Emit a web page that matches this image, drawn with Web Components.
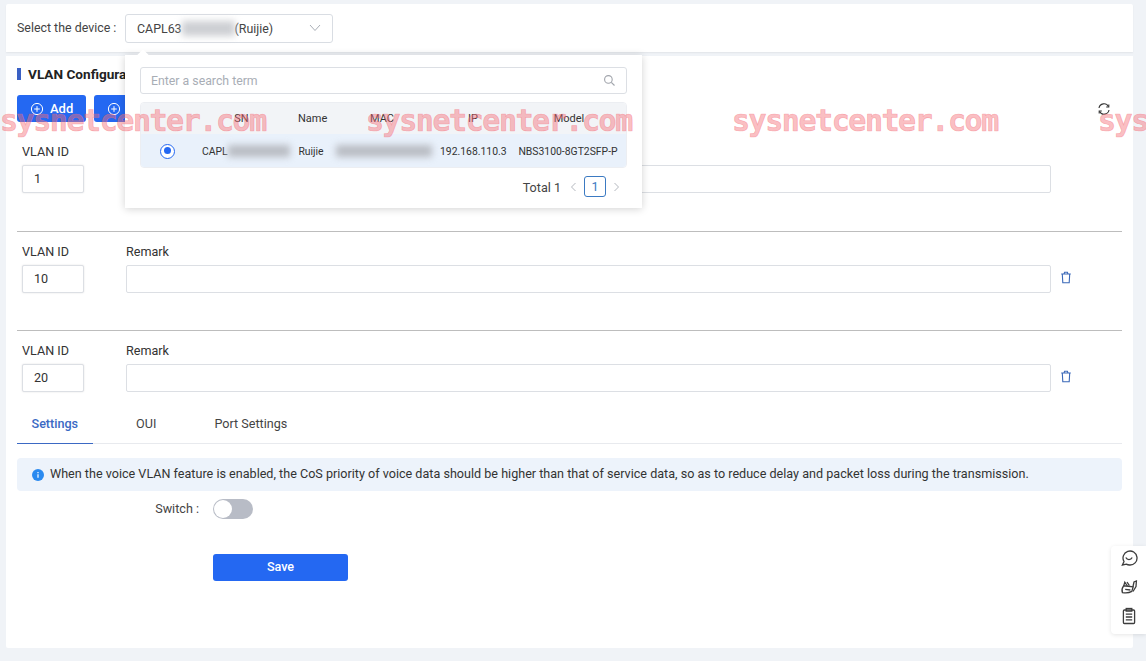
<!DOCTYPE html>
<html>
<head>
<meta charset="utf-8">
<title>VLAN Configuration</title>
<style>
  html, body { margin: 0; height: 100%; }
  body {
    position: relative;
    width: 1146px;
    height: 661px;
    overflow: hidden;
    background: #f0f3f7;
    font-family: Roboto, "Liberation Sans", sans-serif;
    font-size: 12.6px;
    color: #333;
  }
</style>
</head>
<body>
<device-bar label="Select the device" value="(Ruijie)" prefix="CAPL63"></device-bar>
<vlan-page></vlan-page>
<device-popover></device-popover>
<float-tools></float-tools>
<water-mark></water-mark>

<script>
class deviceBar extends HTMLElement {
  constructor() {
    super();
    this.attachShadow({ mode: "open" });
  }
  connectedCallback() {
    this.shadowRoot.innerHTML = `
      <style>
        :host { display: flex; align-items: center; height: 48px; margin: 4px 13px 4px 6px; padding-left: 11px; background: #fff; box-sizing: border-box; box-shadow: 0 1px 2px rgba(0,0,0,.06); border-radius: 2px 2px 0 0; }
        label { width: 108px; margin-top: -1px; color: #444; white-space: nowrap; font-size: 12.4px; }
        .select { position: relative; display: flex; align-items: center; width: 208px; height: 29px; margin-top: 1px; padding-left: 11px; box-sizing: border-box; border: 1px solid #d9dde3; border-radius: 3px; color: #444; font-size: 12.4px; }
        .blur { display: inline-block; width: 53px; height: 15px; background: #cdcfd3; filter: blur(3.5px); }
        svg { position: absolute; right: 11px; top: 8px; }
      </style>
      <label>${this.getAttribute('label')} :</label>
      <div class="select">
        ${this.getAttribute('prefix')}<span class="blur"></span>${this.getAttribute('value')}
        <svg width="12" height="10" viewBox="0 0 12 10" fill="none" stroke="#a9aeb6"><path d="M1 2l5 5.5L11 2"/></svg>
      </div>`;
  }
}

class vlanRow extends HTMLElement {
  constructor() {
    super();
    this.attachShadow({ mode: "open" });
  }
  connectedCallback() {
    const trash = this.hasAttribute('trash') ? `
      <svg class="trash" width="12" height="13" viewBox="0 0 12 13" fill="none" stroke="#3a68b8" stroke-width="1.1">
        <path d="M1.2 3h9.6M4 3l.6-1.8h2.8L8 3M2.3 3l.5 8.8h6.4l.5-8.8"/>
      </svg>` : '';
    this.shadowRoot.innerHTML = `
      <style>
        :host { display: block; }
        :host([divider]) { border-top: 1px solid #bdbdbd; padding-top: 12px; }
        .grid { display: grid; grid-template-columns: 104px 925px 1fr; padding-left: 5px; }
        .lab { height: 14px; line-height: 15px; margin-bottom: 7px; color: #333; }
        .box { height: 28px; box-sizing: border-box; border: 1px solid #dcdfe4; border-radius: 2px; padding-left: 11px; line-height: 26px; color: #333; background: #fff; }
        .id { width: 62px; box-shadow: 0 0 2px rgba(0,0,0,.12); }
        .trash { margin: 6px 0 0 9px; }
      </style>
      <div class="grid">
        <div class="lab">VLAN ID</div>
        <div class="lab">Remark</div>
        <div></div>
        <div class="box id">${this.getAttribute('vid')}</div>
        <div class="box"></div>
        <div>${trash}</div>
      </div>`;
  }
}

class tabBar extends HTMLElement {
  constructor() {
    super();
    this.attachShadow({ mode: "open" });
  }
  connectedCallback() {
    this.shadowRoot.innerHTML = `
      <style>
        :host { display: flex; gap: 29px; height: 40px; box-sizing: border-box; border-bottom: 1px solid #e8eaee; }
        div { height: 40px; line-height: 39px; padding: 0 14.5px; box-sizing: border-box; color: #444; }
        .on { color: #3b69c4; font-weight: 500; border-bottom: 1px solid #3b69c4; }
      </style>
      <div class="on">Settings</div>
      <div>OUI</div>
      <div>Port Settings</div>`;
  }
}

class infoAlert extends HTMLElement {
  constructor() {
    super();
    this.attachShadow({ mode: "open" });
  }
  connectedCallback() {
    this.shadowRoot.innerHTML = `
      <style>
        :host { display: flex; align-items: center; gap: 6px; height: 33px; margin-top: 14px; padding: 0 0 2px 15px; box-sizing: border-box; background: #edf3fb; border-radius: 4px; color: #333; }
        svg { flex: none; margin-top: 2px; }
      </style>
      <svg width="12" height="12" viewBox="0 0 12 12"><circle cx="6" cy="6" r="6" fill="#2a8af0"/><path d="M6 5.2v3.6M6 3v1.2" stroke="#fff" stroke-width="1.2"/></svg>
      <slot></slot>`;
  }
}

class toggleSwitch extends HTMLElement {
  constructor() {
    super();
    this.attachShadow({ mode: "open" });
  }
  connectedCallback() {
    this.shadowRoot.innerHTML = `
      <style>
        :host { display: block; position: relative; width: 40px; height: 20px; border-radius: 10px; background: #b8bcc6; }
        i { position: absolute; left: 1px; top: 1px; width: 18px; height: 18px; border-radius: 50%; background: #fff; }
      </style>
      <i></i>`;
  }
}

class vlanPage extends HTMLElement {
  constructor() {
    super();
    this.attachShadow({ mode: "open" });
  }
  connectedCallback() {
    const plus = `<svg width="14" height="14" viewBox="0 0 14 14" fill="none" stroke="#fff" stroke-width="1"><circle cx="7" cy="7" r="5.6"/><path d="M7 4.2v5.6M4.2 7h5.6"/></svg>`;
    this.shadowRoot.innerHTML = `
      <style>
        :host { display: block; height: 592px; margin: 0 13px 0 6px; padding: 10px 11px 0; box-sizing: border-box; background: #fff; border-radius: 0 0 2px 2px; }
        .title { display: flex; align-items: center; gap: 7px; height: 16px; font-size: 13.6px; font-weight: 700; color: #222; white-space: nowrap; }
        .title i { width: 4px; height: 12px; background: #3a60c4; }
        .tools { display: flex; align-items: center; gap: 8px; margin: 13px 0 22px; height: 27px; position: relative; }
        .btn { display: flex; align-items: center; gap: 6px; height: 27px; padding: 0 13px; box-sizing: border-box; background: #2468f2; color: #fff; border-radius: 3px; font-weight: 500; font-size: 13px; white-space: nowrap; }
        .refresh { margin-left: auto; margin-right: 11px; }
        .rows { display: flex; flex-direction: column; }
        vlan-row { padding-bottom: 37px; }
        vlan-row[first] { padding-bottom: 38px; }
        vlan-row[last] { padding-bottom: 12px; }
        .form { display: grid; grid-template-columns: 182px 1fr; column-gap: 14px; align-items: center; margin-top: 8px; height: 20px; }
        .form span { text-align: right; color: #444; margin-top: -2px; }
        .save { margin: 35px 0 0 196px; width: 135px; height: 27px; line-height: 26px; background: #2468f2; color: #fff; text-align: center; border-radius: 3px; font-weight: 500; }
      </style>
      <div class="title"><i></i>VLAN Configuration</div>
      <div class="tools">
        <div class="btn">${plus}Add</div>
        <div class="btn">${plus}Batch</div>
        <svg class="refresh" width="14" height="14" viewBox="0 0 14 14" fill="none" stroke="#333" stroke-width="1.1">
          <path d="M2 6A5 5 0 0 1 11.4 4.6M12 8a5 5 0 0 1-9.4 1.4"/>
          <path d="M11.8 2.4v2.6H9.2M2.2 11.6V9h2.6"/>
        </svg>
      </div>
      <div class="rows">
        <vlan-row first vid="1"></vlan-row>
        <vlan-row divider trash vid="10"></vlan-row>
        <vlan-row divider last trash vid="20"></vlan-row>
      </div>
      <tab-bar></tab-bar>
      <info-alert>When the voice VLAN feature is enabled, the CoS priority of voice data should be higher than that of service data, so as to reduce delay and packet loss during the transmission.</info-alert>
      <div class="form"><span>Switch :</span><toggle-switch></toggle-switch></div>
      <div class="save">Save</div>`;
  }
}

class devicePopover extends HTMLElement {
  constructor() {
    super();
    this.attachShadow({ mode: "open" });
  }
  connectedCallback() {
    this.shadowRoot.innerHTML = `
      <style>
        :host { position: absolute; left: 125px; top: 55px; width: 517px; height: 153px; padding: 12px 15px 0; box-sizing: border-box; background: #fff; box-shadow: 0 1px 8px rgba(0,0,0,.18); }
        :host::before { content: ""; position: absolute; left: 14px; top: -4px; width: 8px; height: 8px; background: #fff; transform: rotate(45deg); }
        .search { position: relative; height: 27px; line-height: 26px; padding-left: 10px; box-sizing: border-box; border: 1px solid #dcdfe4; border-radius: 3px; color: #a8adb5; font-size: 12.3px; }
        .search svg { position: absolute; right: 10px; top: 6px; }
        .table { margin-top: 8px; border: 1px solid #eceef2; border-radius: 4px; overflow: hidden; }
        .tr { display: grid; grid-template-columns: 44px 113px 26px 116px 66px 1fr; align-items: center; text-align: center; font-size: 11px; color: #333; }
        .head { height: 31px; box-sizing: border-box; background: #f2f4f7; }
        .head span:last-child { padding-left: 6px; }
        .body { height: 33px; padding-top: 1px; box-sizing: border-box; background: #e9f1fb; font-size: 10.4px; }
        .radio { position: relative; width: 15px; height: 15px; box-sizing: border-box; margin: 0 0 0 19px; border: 1.5px solid #2468f2; border-radius: 50%; background: #fff; }
        .radio::after { content: ""; position: absolute; left: 2.5px; top: 2.5px; width: 7px; height: 7px; border-radius: 50%; background: #2468f2; }
        .sn { display: flex; padding-left: 17px; text-align: left; }
        .blur { display: inline-block; background: #b9bcc3; filter: blur(3.5px); height: 12px; }
        .pager { display: flex; align-items: center; justify-content: flex-end; height: 40px; padding: 0 0 3px; box-sizing: border-box; color: #444; }
        .pager svg { margin: 0 6px 0 8px; }
        .pager svg:last-child { margin: 0 6px; }
        .pager .num { width: 22px; height: 21px; line-height: 19px; box-sizing: border-box; border: 1px solid #3b7ac2; border-radius: 3px; text-align: center; color: #3b7ac2; margin: 0; }
        .total { margin-top: 2px; }
      </style>
      <div class="search">Enter a search term
        <svg width="13" height="13" viewBox="0 0 13 13" fill="none" stroke="#a0a4ab" stroke-width="1.1"><circle cx="5.4" cy="5.4" r="3.8"/><path d="M8.3 8.3L11.5 11.5"/></svg>
      </div>
      <div class="table">
        <div class="tr head"><span></span><span>SN</span><span>Name</span><span>MAC</span><span>IP</span><span>Model</span></div>
        <div class="tr body">
          <span class="radio"></span>
          <span class="sn">CAPL<span class="blur" style="width:62px"></span></span>
          <span>Ruijie</span>
          <span style="display:flex;padding-left:12px"><span class="blur" style="width:96px"></span></span>
          <span>192.168.110.3</span>
          <span style="white-space:nowrap;padding-left:4px">NBS3100-8GT2SFP-P</span>
        </div>
      </div>
      <div class="pager">
        <span class="total">Total 1</span>
        <svg width="9" height="10" viewBox="0 0 9 10" fill="none" stroke="#b4b8bf"><path d="M6.5 1L2.5 5l4 4"/></svg>
        <span class="num">1</span>
        <svg width="9" height="10" viewBox="0 0 9 10" fill="none" stroke="#b4b8bf"><path d="M2.5 1l4 4-4 4"/></svg>
      </div>`;
  }
}

class floatTools extends HTMLElement {
  constructor() {
    super();
    this.attachShadow({ mode: "open" });
  }
  connectedCallback() {
    this.shadowRoot.innerHTML = `
      <style>
        :host { position: absolute; left: 1111px; top: 546px; width: 35px; height: 88px; display: flex; flex-direction: column; align-items: center; gap: 11px; padding: 3px 0 0; box-sizing: border-box; background: #fff; border-radius: 4px 0 0 4px; box-shadow: 0 1px 4px rgba(0,0,0,.1); }
        svg { display: block; }
      </style>
      <svg width="18" height="18" viewBox="0 0 18 18" fill="none" stroke="#3d3d3d" stroke-width="1.3">
        <path d="M2.4 16l1.6-3.4A7 7 0 1 1 9.5 16a7 7 0 0 1-3.2-.8z"/><path d="M5.8 8.5c1.4 2.8 5 2.8 6.4 0"/>
      </svg>
      <svg width="18" height="18" viewBox="0 0 18 18" fill="none" stroke="#3d3d3d" stroke-width="1.3">
        <path d="M2.4 14.6c-.9-2.6-.2-5 1.2-6.8l9.6 1-1.4 4.6c-3 1.8-6.4 1.8-9.4 1.2z"/><path d="M3.8 7.6l1-3.4 2.6 3.8M7 4l2.4 3.6M13 8.5l1-4.5 2.4-1-.4 5.5-3 5M5.2 11.4l5.2.6"/>
      </svg>
      <svg width="18" height="18" viewBox="0 0 18 18" fill="none" stroke="#3d3d3d" stroke-width="1.3">
        <rect x="3.4" y="3" width="11.2" height="13.5" rx="1"/><rect x="6.2" y="1.5" width="5.6" height="2.6" fill="#777"/><path d="M5.8 7.2h6.4M5.8 10h6.4M5.8 12.8h6.4"/>
      </svg>`;
  }
}

class waterMark extends HTMLElement {
  constructor() {
    super();
    this.attachShadow({ mode: "open" });
  }
  connectedCallback() {
    this.shadowRoot.innerHTML = `
      <style>
        :host { position: absolute; left: 0; top: 103px; width: 1146px; height: 40px; overflow: hidden; pointer-events: none; }
        div { display: flex; gap: 100px; white-space: nowrap; font: 700 30px/36px "DejaVu Sans Mono", monospace; letter-spacing: -1.45px; color: rgba(245, 110, 120, .46); -webkit-text-stroke: .7px rgba(245, 110, 120, .46); }
        span { flex: none; width: 266px; }
      </style>
      <div><span>sysnetcenter.com</span><span>sysnetcenter.com</span><span>sysnetcenter.com</span><span>sysnetcenter.com</span></div>`;
  }
}

customElements.define('device-bar', deviceBar);
customElements.define('vlan-row', vlanRow);
customElements.define('tab-bar', tabBar);
customElements.define('info-alert', infoAlert);
customElements.define('toggle-switch', toggleSwitch);
customElements.define('vlan-page', vlanPage);
customElements.define('device-popover', devicePopover);
customElements.define('float-tools', floatTools);
customElements.define('water-mark', waterMark);
</script>
</body>
</html>
